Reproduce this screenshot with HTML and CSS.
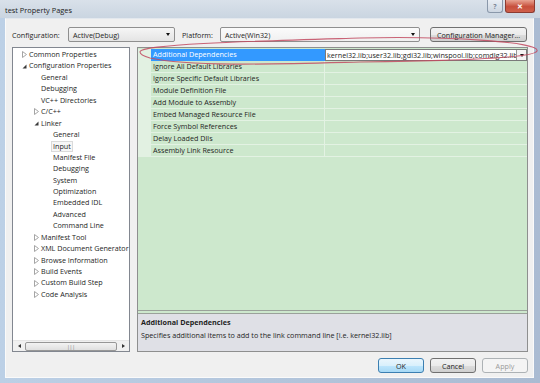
FILE: index.html
```html
<!DOCTYPE html>
<html lang="en">
<head>
    <meta charset="UTF-8" />
    <title>test Property Pages</title>
    <link rel="stylesheet" href="styles.css">
</head>
<body>
<div class="window">

    <!-- Title bar -->
    <div class="titlebar">
        <span class="title">test Property Pages</span>
        <div class="caption-buttons">
            <span class="cap-btn help">?</span>
            <span class="cap-btn close">&#x2715;</span>
        </div>
    </div>

    <div class="client">

        <!-- Configuration / platform selectors -->
        <div class="toolbar">
            <span class="tb-label">Configuration:</span>
            <div class="combo combo-config">
                <span class="combo-text">Active(Debug)</span>
                <span class="combo-arrow"></span>
            </div>
            <span class="tb-label platform-label">Platform:</span>
            <div class="combo combo-platform">
                <span class="combo-text">Active(Win32)</span>
                <span class="combo-arrow"></span>
            </div>
            <button class="btn btn-manager">Configuration Manager...</button>
        </div>

        <div class="main">

            <!-- Category tree -->
            <div class="tree">
                <ul class="tree-list">
                    <li class="lvl-0"><svg class="exp" width="5" height="7"><path d="M0.5 0.5 L4.5 3.5 L0.5 6.5 Z" fill="none" stroke="#a5a5a5"/></svg>Common Properties</li>
                    <li class="lvl-0"><svg class="exp" width="5" height="7"><path d="M4.5 1.5 L4.5 5.5 L0.5 5.5 Z" fill="#3a3a3a"/></svg>Configuration Properties</li>
                    <li class="lvl-1">General</li>
                    <li class="lvl-1">Debugging</li>
                    <li class="lvl-1">VC++ Directories</li>
                    <li class="lvl-1"><svg class="exp" width="5" height="7"><path d="M0.5 0.5 L4.5 3.5 L0.5 6.5 Z" fill="none" stroke="#a5a5a5"/></svg>C/C++</li>
                    <li class="lvl-1"><svg class="exp" width="5" height="7"><path d="M4.5 1.5 L4.5 5.5 L0.5 5.5 Z" fill="#3a3a3a"/></svg>Linker</li>
                    <li class="lvl-2">General</li>
                    <li class="lvl-2"><span class="current">Input</span></li>
                    <li class="lvl-2">Manifest File</li>
                    <li class="lvl-2">Debugging</li>
                    <li class="lvl-2">System</li>
                    <li class="lvl-2">Optimization</li>
                    <li class="lvl-2">Embedded IDL</li>
                    <li class="lvl-2">Advanced</li>
                    <li class="lvl-2">Command Line</li>
                    <li class="lvl-1"><svg class="exp" width="5" height="7"><path d="M0.5 0.5 L4.5 3.5 L0.5 6.5 Z" fill="none" stroke="#a5a5a5"/></svg>Manifest Tool</li>
                    <li class="lvl-1"><svg class="exp" width="5" height="7"><path d="M0.5 0.5 L4.5 3.5 L0.5 6.5 Z" fill="none" stroke="#a5a5a5"/></svg>XML Document Generator</li>
                    <li class="lvl-1"><svg class="exp" width="5" height="7"><path d="M0.5 0.5 L4.5 3.5 L0.5 6.5 Z" fill="none" stroke="#a5a5a5"/></svg>Browse Information</li>
                    <li class="lvl-1"><svg class="exp" width="5" height="7"><path d="M0.5 0.5 L4.5 3.5 L0.5 6.5 Z" fill="none" stroke="#a5a5a5"/></svg>Build Events</li>
                    <li class="lvl-1"><svg class="exp" width="5" height="7"><path d="M0.5 0.5 L4.5 3.5 L0.5 6.5 Z" fill="none" stroke="#a5a5a5"/></svg>Custom Build Step</li>
                    <li class="lvl-1"><svg class="exp" width="5" height="7"><path d="M0.5 0.5 L4.5 3.5 L0.5 6.5 Z" fill="none" stroke="#a5a5a5"/></svg>Code Analysis</li>
                </ul>
                <div class="hscroll">
                    <span class="sb-arrow left"></span>
                    <div class="sb-track"><div class="sb-thumb">|||</div></div>
                    <span class="sb-arrow right"></span>
                </div>
            </div>

            <!-- Property grid -->
            <div class="props">
                <div class="grid">
                    <div class="row">
                        <div class="margin"></div>
                        <div class="name selected">Additional Dependencies</div>
                        <div class="value editing">
                            <span class="value-text">kernel32.lib;user32.lib;gdi32.lib;winspool.lib;comdlg32.lib</span>
                            <span class="drop"></span>
                        </div>
                    </div>
                    <div class="row"><div class="margin"></div><div class="name">Ignore All Default Libraries</div><div class="value"></div></div>
                    <div class="row"><div class="margin"></div><div class="name">Ignore Specific Default Libraries</div><div class="value"></div></div>
                    <div class="row"><div class="margin"></div><div class="name">Module Definition File</div><div class="value"></div></div>
                    <div class="row"><div class="margin"></div><div class="name">Add Module to Assembly</div><div class="value"></div></div>
                    <div class="row"><div class="margin"></div><div class="name">Embed Managed Resource File</div><div class="value"></div></div>
                    <div class="row"><div class="margin"></div><div class="name">Force Symbol References</div><div class="value"></div></div>
                    <div class="row"><div class="margin"></div><div class="name">Delay Loaded Dlls</div><div class="value"></div></div>
                    <div class="row"><div class="margin"></div><div class="name">Assembly Link Resource</div><div class="value"></div></div>
                </div>
                <div class="desc">
                    <div class="desc-title">Additional Dependencies</div>
                    <div class="desc-text">Specifies additional items to add to the link command line [i.e. kernel32.lib]</div>
                </div>
            </div>
        </div>

        <!-- Dialog buttons -->
        <div class="footer">
            <button class="btn btn-ok">OK</button>
            <button class="btn">Cancel</button>
            <button class="btn" disabled>Apply</button>
        </div>
    </div>

    <!-- hand-drawn red ring around the highlighted row -->
    <svg class="annotation" width="540" height="80" viewBox="0 0 540 80">
        <path d="M140,52 C139,44 260,41 360,38 C450,36 541,42 537,51 C534,58 450,61 360,62 C280,64 190,67 150,58 C143,56 140,54 140,52 Z"
              fill="none" stroke="#c24a60" stroke-width="1.1" opacity="0.85"/>
    </svg>
</div>
</body>
</html>
```

FILE: styles.css
```css
* {
    margin: 0;
    padding: 0;
    box-sizing: border-box;
}
body {
    width: 540px;
    height: 383px;
    overflow: hidden;
    font-family: "Open Sans", "Liberation Sans", sans-serif;
    font-size: 7.2px;
    color: #1e1e1e;
    background: #b7c8dc;
}
.window {
    position: relative;
    width: 540px;
    height: 383px;
    display: flex;
    flex-direction: column;
    background: linear-gradient(90deg, #bcd0e6, #aabbd2);
    padding: 0 6px 5px 5px;
}

/* title bar */
.titlebar {
    height: 18px;
    flex-shrink: 0;
    display: flex;
    align-items: flex-start;
    justify-content: space-between;
    margin: 0 -6px 0 -5px;
    padding-left: 5px;
    background: linear-gradient(#d9e1ea, #cad5e1);
}
.title {
    margin-top: 5px;
    font-size: 7.4px;
    color: #222;
}
.caption-buttons {
    display: flex;
    gap: 2px;
    margin-right: 5px;
}
.cap-btn {
    height: 13px;
    display: flex;
    align-items: center;
    justify-content: center;
    border: 1px solid #8a98aa;
    border-top: none;
    border-radius: 0 0 3px 3px;
    font-size: 7px;
    font-weight: bold;
}
.help {
    width: 16px;
    background: linear-gradient(#e9eef4, #cdd6e1);
    color: #7a8696;
}
.close {
    width: 30px;
    background: linear-gradient(#e8a493, #c74f3c 55%, #d0614c);
    border-color: #8c3b31;
    color: #fff;
}

/* client area */
.client {
    flex: 1;
    min-height: 0;
    display: flex;
    flex-direction: column;
    background: #f0f0f0;
    border: 1px solid #fafafa;
    border-top-color: #e3e8ee;
    padding: 8px 5px 4px 6px;
}
.toolbar {
    display: flex;
    align-items: center;
    height: 15px;
}
.tb-label {
    width: 56px;
}
.platform-label {
    width: 38px;
    margin-left: 7px;
}
.combo {
    height: 15px;
    display: flex;
    align-items: center;
    justify-content: space-between;
    padding: 0 4px;
    border: 1px solid #8f8f8f;
    border-radius: 2px;
    background: linear-gradient(#f6f6f6, #e4e4e4);
}
.combo-config {
    width: 107px;
}
.combo-platform {
    width: 200px;
    background: linear-gradient(#fbfbfb, #f0f0f0);
}
.combo-arrow {
    width: 0;
    height: 0;
    border-left: 2.5px solid transparent;
    border-right: 2.5px solid transparent;
    border-top: 3px solid #111;
}
.btn {
    height: 15px;
    width: 46px;
    font-family: inherit;
    font-size: 7.2px;
    color: #1e1e1e;
    border: 1px solid #707070;
    border-radius: 3px;
    background: linear-gradient(#f2f2f2, #ebebeb 50%, #dddddd 51%, #cfcfcf);
}
.btn-manager {
    width: 97px;
    margin-left: 10px;
}
.btn:disabled {
    color: #9a9a9a;
    border-color: #adb2b5;
    background: #f4f4f4;
}
.btn-ok {
    border-color: #3c7fb1;
    background: linear-gradient(#eaf6fd, #d9f0fc 50%, #bee6fd 51%, #a7d9f5);
}

/* main panes */
.main {
    display: flex;
    gap: 7px;
    margin-top: 5px;
    height: 305px;
    flex-shrink: 0;
}
.tree {
    width: 118px;
    display: flex;
    flex-direction: column;
    justify-content: space-between;
    background: #fff;
    border: 1px solid #828790;
}
.tree-list {
    list-style: none;
    padding-top: 1px;
}
.tree-list li {
    height: 11.43px;
    line-height: 11.43px;
    display: flex;
    align-items: center;
    white-space: nowrap;
}
.lvl-0 {
    padding-left: 16px;
}
.lvl-1 {
    padding-left: 28px;
}
.lvl-2 {
    padding-left: 40px;
}
.exp {
    margin-left: -7px;
    margin-right: 2px;
}
.current {
    padding: 0 1px;
    margin-left: -2px;
    line-height: 9px;
    border: 1px solid #dadada;
    background: #f7f7f7;
}
.hscroll {
    height: 11px;
    display: flex;
    align-items: center;
    background: #f0f0f0;
    border-top: 1px solid #e6e6e6;
}
.sb-arrow {
    width: 12px;
    display: flex;
    justify-content: center;
}
.sb-arrow::before {
    content: "";
    border-top: 2.5px solid transparent;
    border-bottom: 2.5px solid transparent;
}
.sb-arrow.left::before {
    border-right: 3px solid #333;
}
.sb-arrow.right::before {
    border-left: 3px solid #333;
}
.sb-track {
    flex: 1;
}
.sb-thumb {
    height: 9px;
    width: 92px;
    font-size: 5px;
    line-height: 8px;
    text-align: center;
    color: #777;
    border: 1px solid #979797;
    border-radius: 2px;
    background: linear-gradient(#f3f3f3, #e0e0e0);
}

/* property grid */
.props {
    flex: 1;
    min-width: 0;
    display: flex;
    flex-direction: column;
    border: 1px solid #8e8f8f;
    background: #cde8cd;
}
.grid {
    flex: 1;
    padding-top: 1px;
    border-bottom: 1px solid #9aa19a;
}
.row {
    display: flex;
    height: 12px;
}
.margin {
    width: 13px;
    flex-shrink: 0;
    background: #e2f1e2;
}
.name {
    width: 174px;
    flex-shrink: 0;
    padding-left: 2px;
    line-height: 11px;
    border-bottom: 1px solid #e3f2e3;
    border-right: 1px solid #e3f2e3;
    white-space: nowrap;
}
.name.selected {
    background: #3399ff;
    color: #fff;
    border-color: #3399ff;
}
.value {
    flex: 1;
    min-width: 0;
    border-bottom: 1px solid #e3f2e3;
}
.value.editing {
    display: flex;
    align-items: center;
    background: #fff;
    border: 1px solid #7a7a7a;
    padding-left: 1px;
    overflow: hidden;
}
.value-text {
    flex: 1;
    min-width: 0;
    overflow: hidden;
    white-space: nowrap;
}
.drop {
    width: 10px;
    height: 10px;
    flex-shrink: 0;
    display: flex;
    align-items: center;
    justify-content: center;
    border-left: 1px solid #999;
    background: #f4f4f4;
}
.drop::before {
    content: "";
    border-left: 2.5px solid transparent;
    border-right: 2.5px solid transparent;
    border-top: 3px solid #111;
}
.desc {
    height: 38px;
    margin-top: 2px;
    padding: 3px 3px 0;
    border-top: 1px solid #9aa19a;
    background: #dfe0e6;
}
.desc-title {
    font-weight: bold;
    line-height: 10px;
}
.desc-text {
    margin-top: 3px;
    white-space: nowrap;
}

/* dialog buttons */
.footer {
    display: flex;
    justify-content: flex-end;
    gap: 6px;
    margin-top: 6px;
}

.annotation {
    position: absolute;
    left: 0;
    top: 0;
    pointer-events: none;
}
```
